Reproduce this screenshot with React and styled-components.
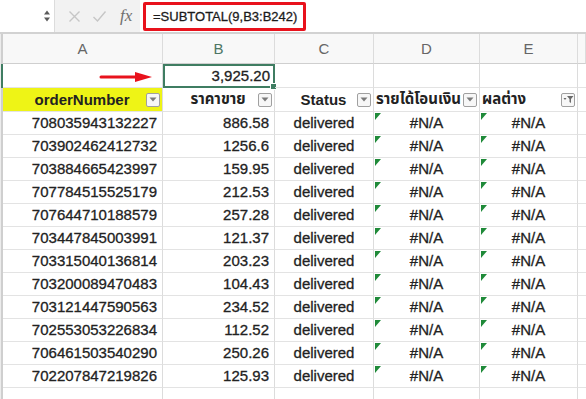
import React from 'react'
import styled, { createGlobalStyle } from 'styled-components'

const GlobalStyle = createGlobalStyle`
  body {
    margin: 0;
    background: #fff;
    font-family: "Liberation Sans", Arial, "Noto Sans Thai", "Noto Sans", sans-serif;
    overflow: hidden;
  }
`

const rows = [
  ['708035943132227', '886.58'],
  ['703902462412732', '1256.6'],
  ['703884665423997', '159.95'],
  ['707784515525179', '212.53'],
  ['707644710188579', '257.28'],
  ['703447845003991', '121.37'],
  ['703315040136814', '203.23'],
  ['703200089470483', '104.43'],
  ['703121447590563', '234.52'],
  ['702553053226834', '112.52'],
  ['706461503540290', '250.26'],
  ['702207847219826', '125.93'],
]

const FormulaBar = styled.div`
  display: flex;
  height: 34px;
  box-sizing: border-box;
  background: #f2f2f2;
  border-bottom: 2px solid #d2d2d2;
`

const NameBox = styled.div`
  width: 55px;
  background: #fff;
  border-right: 1px solid #dcdcdc;
  display: flex;
  align-items: center;
  justify-content: flex-end;
  padding-right: 3px;
  box-sizing: border-box;
`

const Tools = styled.div`
  width: 85px;
  display: flex;
  align-items: center;
  gap: 11px;
  padding-left: 13px;
  box-sizing: border-box;
`

const Fx = styled.span`
  font-family: "Liberation Serif", serif;
  font-style: italic;
  font-size: 17px;
  color: #6f6f6f;
  margin-left: 2px;
`

const FormulaInput = styled.div`
  flex: 1;
  background: #fff;
  display: flex;
  align-items: center;
  padding-left: 3px;
`

const Highlight = styled.div`
  height: 29px;
  box-sizing: border-box;
  border: 3px solid #e8121c;
  border-radius: 2px;
  padding: 0 6px 0 7px;
  display: flex;
  align-items: center;
  font-size: 13px;
  color: #1b1b1b;
  -webkit-text-stroke: 0.3px #1b1b1b;
`

const Row = styled.div`
  display: grid;
  grid-template-columns: 3px 160px 112px 99px 106px 98px 8px;
  height: ${p => p.$h}px;
  background: ${p => p.$bg || '#fff'};
`

const Edge = styled.div`
  border-right: 2px solid ${p => (p.$active ? '#3f7d62' : '#cfcfcf')};
  background: #ececec;
  box-sizing: border-box;
`

const ColHead = styled.div`
  display: flex;
  align-items: center;
  justify-content: center;
  font-size: 15px;
  color: ${p => (p.$active ? '#4c7664' : '#666')};
  border-right: 1px solid #dcdcdc;
  border-bottom: 1px solid #cfcfcf;
  box-sizing: border-box;
`

const Cell = styled.div`
  position: relative;
  display: flex;
  align-items: center;
  justify-content: ${p => p.$align || 'flex-start'};
  padding: 0 5px 1px;
  font-size: 15px;
  color: #222;
  -webkit-text-stroke: 0.3px #222;
  background: ${p => p.$bg || 'transparent'};
  border-right: 1px solid #dcdcdc;
  border-bottom: 1px solid #e3e3e3;
  box-sizing: border-box;
  white-space: nowrap;
  min-width: 0;

  ${p =>
    p.$flag &&
    `&::before {
      content: '';
      position: absolute;
      top: 1px;
      left: 1px;
      border-top: 7px solid #1f8a39;
      border-right: 6px solid transparent;
    }`}
`

const Selected = styled(Cell)`
  border: 2px solid #3f7d62;
  padding-right: 3px;

  &::after {
    content: '';
    position: absolute;
    right: -4px;
    bottom: -4px;
    width: 5px;
    height: 5px;
    background: #3f7d62;
    border: 1px solid #fff;
  }
`

const HeadCell = styled.div`
  display: flex;
  align-items: center;
  gap: 1px;
  padding: 0 2px 0 ${p => (p.$center ? '16px' : '2px')};
  font-size: 15px;
  font-weight: 700;
  color: #222;
  background: ${p => p.$bg || 'transparent'};
  border-right: 1px solid #dcdcdc;
  border-bottom: 1px solid #e3e3e3;
  box-sizing: border-box;
  white-space: nowrap;
  overflow: hidden;
  width: 100%;
`

const Label = styled.span`
  flex: 1 1 0;
  width: 0;
  overflow: hidden;
  text-align: ${p => (p.$center ? 'center' : 'left')};
`

const FilterBtn = styled.span`
  position: relative;
  z-index: 1;
  flex: 0 0 14px;
  width: 14px;
  height: 14px;
  box-sizing: border-box;
  border: 1px solid #a0a0a0;
  border-radius: 2px;
  background: #f7f7f7;
  display: flex;
  align-items: center;
  justify-content: center;
`

const Arrow = styled.svg`
  position: absolute;
  left: 96px;
  top: 7px;
`

const DropIcon = () => (
  <svg width="8" height="5" viewBox="0 0 8 5">
    <path d="M0.5 0.5 L7.5 0.5 L4 4.5 Z" fill="#7a7a7a" />
  </svg>
)

const FilteredIcon = () => (
  <svg width="11" height="9" viewBox="0 0 11 9">
    <path d="M0.5 3 L3.5 3 L2 5 Z" fill="#6a6a6a" />
    <path d="M4 1 L10.5 1 L8 4 L8 8 L6.5 7 L6.5 4 Z" fill="#6a6a6a" />
  </svg>
)

const Filter = ({ filtered }) => (
  <FilterBtn>{filtered ? <FilteredIcon /> : <DropIcon />}</FilterBtn>
)

const Header = ({ children, center, bg, filtered }) => (
  <HeadCell $center={center} $bg={bg}>
    <Label $center={center}>{children}</Label>
    <Filter filtered={filtered} />
  </HeadCell>
)

export default function App() {
  return (
    <>
      <GlobalStyle />
      <FormulaBar>
        <NameBox>
          <svg width="8" height="14" viewBox="0 0 8 14">
            <path d="M1 5.5 L4 1.5 L7 5.5 Z" fill="#5a5a5a" />
            <path d="M1 8.5 L4 12.5 L7 8.5 Z" fill="#5a5a5a" />
          </svg>
        </NameBox>
        <Tools>
          <svg width="13" height="13" viewBox="0 0 13 13">
            <path d="M1.5 1.5 L11.5 11.5 M11.5 1.5 L1.5 11.5" stroke="#c6c6c6" strokeWidth="1.4" />
          </svg>
          <svg width="15" height="13" viewBox="0 0 15 13">
            <path d="M1.5 7 L5.5 11 L13.5 1.5" stroke="#c6c6c6" strokeWidth="1.4" fill="none" />
          </svg>
          <Fx>fx</Fx>
        </Tools>
        <FormulaInput>
          <Highlight>=SUBTOTAL(9,B3:B242)</Highlight>
        </FormulaInput>
      </FormulaBar>

      <Row $h={30} $bg="#f8f8f8">
        <Edge />
        <ColHead>A</ColHead>
        <ColHead $active>B</ColHead>
        <ColHead>C</ColHead>
        <ColHead>D</ColHead>
        <ColHead>E</ColHead>
        <ColHead />
      </Row>

      <Row $h={24}>
        <Edge $active />
        <Cell>
          <Arrow width="54" height="12" viewBox="0 0 54 12">
            <path d="M2 6 L38 6" stroke="#e8121c" strokeWidth="3" strokeLinecap="round" />
            <path d="M36 1 L53 6 L36 11 Z" fill="#e8121c" />
          </Arrow>
        </Cell>
        <Selected $align="flex-end">3,925.20</Selected>
        <Cell />
        <Cell />
        <Cell />
        <Cell />
      </Row>

      <Row $h={24}>
        <Edge />
        <Header center bg="#eef416">orderNumber</Header>
        <Header center>ราคาขาย</Header>
        <Header center>Status</Header>
        <Header>รายได้โอนเงิน</Header>
        <Header filtered>ผลต่าง</Header>
        <Cell />
      </Row>

      {rows.map(([order, price]) => (
        <Row $h={23} key={order}>
          <Edge />
          <Cell $align="flex-end">{order}</Cell>
          <Cell $align="flex-end">{price}</Cell>
          <Cell $align="center">delivered</Cell>
          <Cell $align="center" $flag>#N/A</Cell>
          <Cell $align="center" $flag>#N/A</Cell>
          <Cell />
        </Row>
      ))}

      <Row $h={23}>
        <Edge />
        <Cell />
        <Cell />
        <Cell />
        <Cell />
        <Cell />
        <Cell />
      </Row>
    </>
  )
}
